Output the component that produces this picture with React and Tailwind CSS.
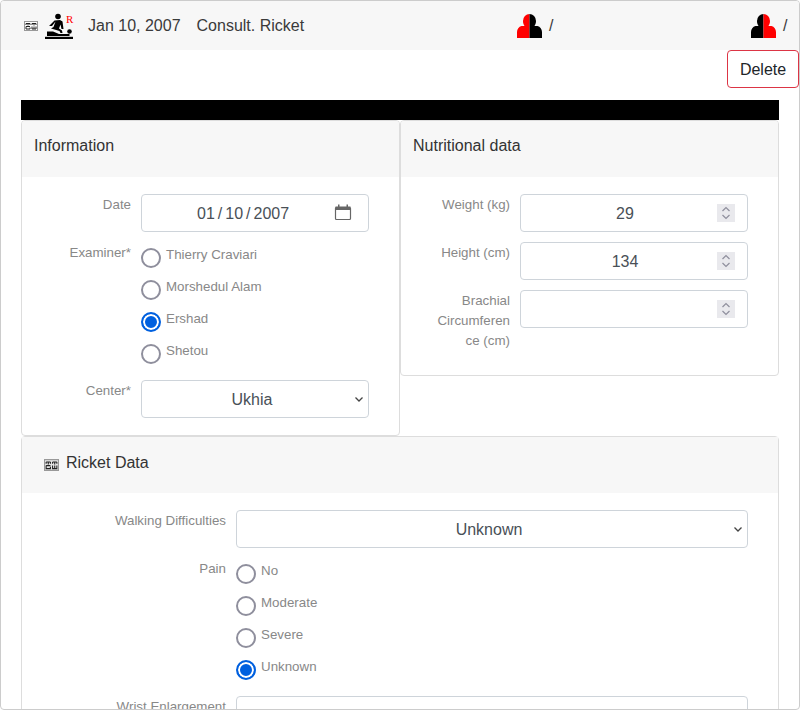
const fieldClass = "h-[38px] bg-white border border-[#ced4da] rounded text-center text-base text-[#495057] outline-none pt-0.5"
const labelClass = "text-right text-[13.33px] leading-5 pt-px text-[#888] break-words shrink-0"

function Tofu({ className, width = 14, height = 10, fill = "#fff" }) {
  return (
    <svg className={className} width={width} height={height} viewBox="0 0 14 10" preserveAspectRatio="none">
      <rect x="0.5" y="0.5" width="13" height="9" fill={fill} stroke="#999" />
      <path d="M2 2.500h4M4 2.500v2M2 2.500v1.500M6 2.500v1.500M8 2.500h4M10 2.500v2M8 2.500v1.500M12 2.500v1.500M2 5.500h4M2 5.500v2.500h4V6.500M8 5.500v2.500h4v-2.500M10 5.500v2.500" fill="none" stroke="#222" strokeWidth="1" />
    </svg>
  )
}

function Therapist() {
  return (
    <svg width="28" height="26" viewBox="0 0 28 26">
      <circle cx="13" cy="3.500" r="2.800" fill="#000" />
      <path d="M9.500 7.500 15 7l2.500 1.500 1 7.500h-2l-1-4.500-1.500 4 3 2 .5 2.500h-2l-1-2-5-1.500-3.500-1 2.500-1.500 2-5.500-3.500 4.500L4 13z" fill="#000" />
      <circle cx="24.500" cy="18.500" r="2.300" fill="#000" />
      <path d="M2 18.500h6l6 2.500h10.500v2H2z" fill="#000" />
      <rect x="0" y="23.800" width="28" height="2.200" fill="#000" />
    </svg>
  )
}

function HalfPerson({ flip }) {
  const left = flip ? "#000" : "#f00"
  const right = flip ? "#f00" : "#000"
  return (
    <svg width="25" height="24" viewBox="0 0 25 24">
      <path d="M12.500 0A6.500 7 0 0 0 6 7c0 2 .6 3.700 1.600 5H4.500C1.800 12.800 0 15 0 18v6h12.500z" fill={left} />
      <path d="M12.500 0A6.500 7 0 0 1 19 7c0 2-.6 3.700-1.600 5h3.100c2.700.8 4.500 3 4.500 6v6H12.500z" fill={right} />
    </svg>
  )
}

function Spinner() {
  return (
    <svg className="absolute right-[13px] top-[10px] pointer-events-none" width="18" height="18" viewBox="0 0 18 18">
      <rect width="18" height="18" fill="#e9e9ed" />
      <path d="M5.500 7 9 3.500 12.500 7M5.500 11 9 14.500 12.500 11" fill="none" stroke="#8f8f9d" strokeWidth="1.200" />
    </svg>
  )
}

function NumberField({ value }) {
  return (
    <div className="relative w-[228px]">
      <input
        type="number"
        defaultValue={value}
        className={`${fieldClass} w-full pr-[18px] [appearance:textfield] [&::-webkit-inner-spin-button]:appearance-none`}
      />
      <Spinner />
    </div>
  )
}

function SelectField({ width, value }) {
  return (
    <div className={`relative ${width}`}>
      <select className={`${fieldClass} w-full appearance-none pr-[6px]`} defaultValue={value}>
        <option>{value}</option>
      </select>
      <svg className="absolute right-[5px] top-[16px] pointer-events-none" width="10" height="7" viewBox="0 0 10 7">
        <path d="M1.500 1.500 5 5 8.500 1.500" fill="none" stroke="#444" strokeWidth="1.300" />
      </svg>
    </div>
  )
}

function Radios({ name, options, checked }) {
  return (
    <div className="flex flex-col">
      {options.map(option =>
        <label key={option} className="flex h-8 gap-[5px]">
          <input
            type="radio"
            name={name}
            defaultChecked={option === checked}
            className="appearance-none w-5 h-5 mt-1.5 rounded-full border-2 border-[#8f8f9d] bg-white checked:border-[#0060df] checked:bg-[#0060df] checked:shadow-[inset_0_0_0_2px_#fff]"
          />
          <span className="text-[13.33px] leading-5 mt-[3px] text-[#888]">{option}</span>
        </label>
      )}
    </div>
  )
}

function CardHeader({ children }) {
  return <div className="h-14 bg-[#f7f7f7] flex items-start text-[#333]">{children}</div>
}

export default function App() {
  return (
    <div className="h-[710px] overflow-hidden border border-[#ccc] rounded font-['Liberation_Sans',sans-serif] text-[#212529] bg-white">
      {/* modal header */}
      <div className="h-[49px] bg-[#f7f7f7] grid grid-cols-[516px_234px_1fr] items-center text-base text-[#3a3a3a]">
        <div className="flex items-center pl-[23px]">
          <Tofu />
          <span className="ml-[7px]"><Therapist /></span>
          <span className="relative -top-[7px] -ml-[7px] w-[22px] font-['Liberation_Serif',serif] text-[11px] leading-3 text-[#f00]">R</span>
          <span>Jan 10, 2007</span>
          <span className="ml-4">Consult. Ricket</span>
        </div>
        <div className="flex items-center gap-[7px]">
          <HalfPerson />
          <span>/</span>
        </div>
        <div className="flex items-center gap-[7px]">
          <HalfPerson flip />
          <span>/</span>
        </div>
      </div>

      <div className="flex justify-end">
        <button className="w-[72px] h-[38px] bg-white border border-[#dc3545] rounded text-base pt-0.5">Delete</button>
      </div>

      <div className="mx-5 mt-3">
        <div className="h-5 bg-black" />

        <div className="flex items-start">
          {/* Information */}
          <div className="w-[379px] h-[316px] border border-[#ddd] rounded overflow-hidden">
            <CardHeader><span className="pl-3 pt-[13px] leading-6">Information</span></CardHeader>
            <div className="pt-[17px] flex flex-col gap-2.5">
              <div className="flex gap-2.5">
                <div className={`${labelClass} w-[109px]`}>Date</div>
                <div className="relative w-[228px]">
                  <input
                    type="date"
                    defaultValue="2007-01-10"
                    className={`${fieldClass} w-full pl-[54px] pr-[24px] [&::-webkit-calendar-picker-indicator]:hidden [&::-webkit-datetime-edit-text]:px-[2px]`}
                  />
                  <svg className="absolute right-[17px] top-[9px] pointer-events-none" width="18" height="18" viewBox="0 0 18 18">
                    <path d="M2.500 4.500h13a1 1 0 0 1 1 1v10a1 1 0 0 1-1 1h-13a1 1 0 0 1-1-1v-10a1 1 0 0 1 1-1z" fill="none" stroke="#666" strokeWidth="1.200" />
                    <path d="M1.500 3.500h15v3.500h-15zM4 1.500h1.500v2H4zM12.500 1.500H14v2h-1.500z" fill="#666" />
                  </svg>
                </div>
              </div>
              <div className="flex gap-2.5">
                <div className={`${labelClass} w-[109px]`}>Examiner*</div>
                <Radios
                  name="examiner"
                  options={["Thierry Craviari", "Morshedul Alam", "Ershad", "Shetou"]}
                  checked="Ershad"
                />
              </div>
              <div className="flex gap-2.5">
                <div className={`${labelClass} w-[109px]`}>Center*</div>
                <SelectField width="w-[228px]" value="Ukhia" />
              </div>
            </div>
          </div>

          {/* Nutritional data */}
          <div className="w-[379px] h-[256px] border border-[#ddd] rounded overflow-hidden">
            <CardHeader><span className="pl-3 pt-[13px] leading-6">Nutritional data</span></CardHeader>
            <div className="pt-[17px] flex flex-col gap-2.5">
              <div className="flex gap-2.5">
                <div className={`${labelClass} w-[109px]`}>Weight (kg)</div>
                <NumberField value="29" />
              </div>
              <div className="flex gap-2.5">
                <div className={`${labelClass} w-[109px]`}>Height (cm)</div>
                <NumberField value="134" />
              </div>
              <div className="flex gap-2.5">
                <div className={`${labelClass} w-[78px] ml-[31px]`}>Brachial Circumference (cm)</div>
                <NumberField value="" />
              </div>
            </div>
          </div>
        </div>

        {/* Ricket data */}
        <div className="border border-[#ddd] rounded">
          <CardHeader>
            <div className="pl-[22px] pt-3.5 flex items-start">
              <Tofu className="mt-2" width={15} height={12} fill="#e4e4e4" />
              <span className="ml-[7px] leading-6">Ricket Data</span>
            </div>
          </CardHeader>
          <div className="pt-[17px] flex flex-col gap-2.5">
            <div className="flex gap-2.5">
              <div className={`${labelClass} w-[204px]`}>Walking Difficulties</div>
              <SelectField width="w-[512px]" value="Unknown" />
            </div>
            <div className="flex gap-2.5">
              <div className={`${labelClass} w-[204px]`}>Pain</div>
              <Radios name="pain" options={["No", "Moderate", "Severe", "Unknown"]} checked="Unknown" />
            </div>
            <div className="flex gap-2.5">
              <div className={`${labelClass} w-[204px]`}>Wrist Enlargement</div>
              <SelectField width="w-[512px]" value="" />
            </div>
          </div>
        </div>
      </div>
    </div>
  )
}
